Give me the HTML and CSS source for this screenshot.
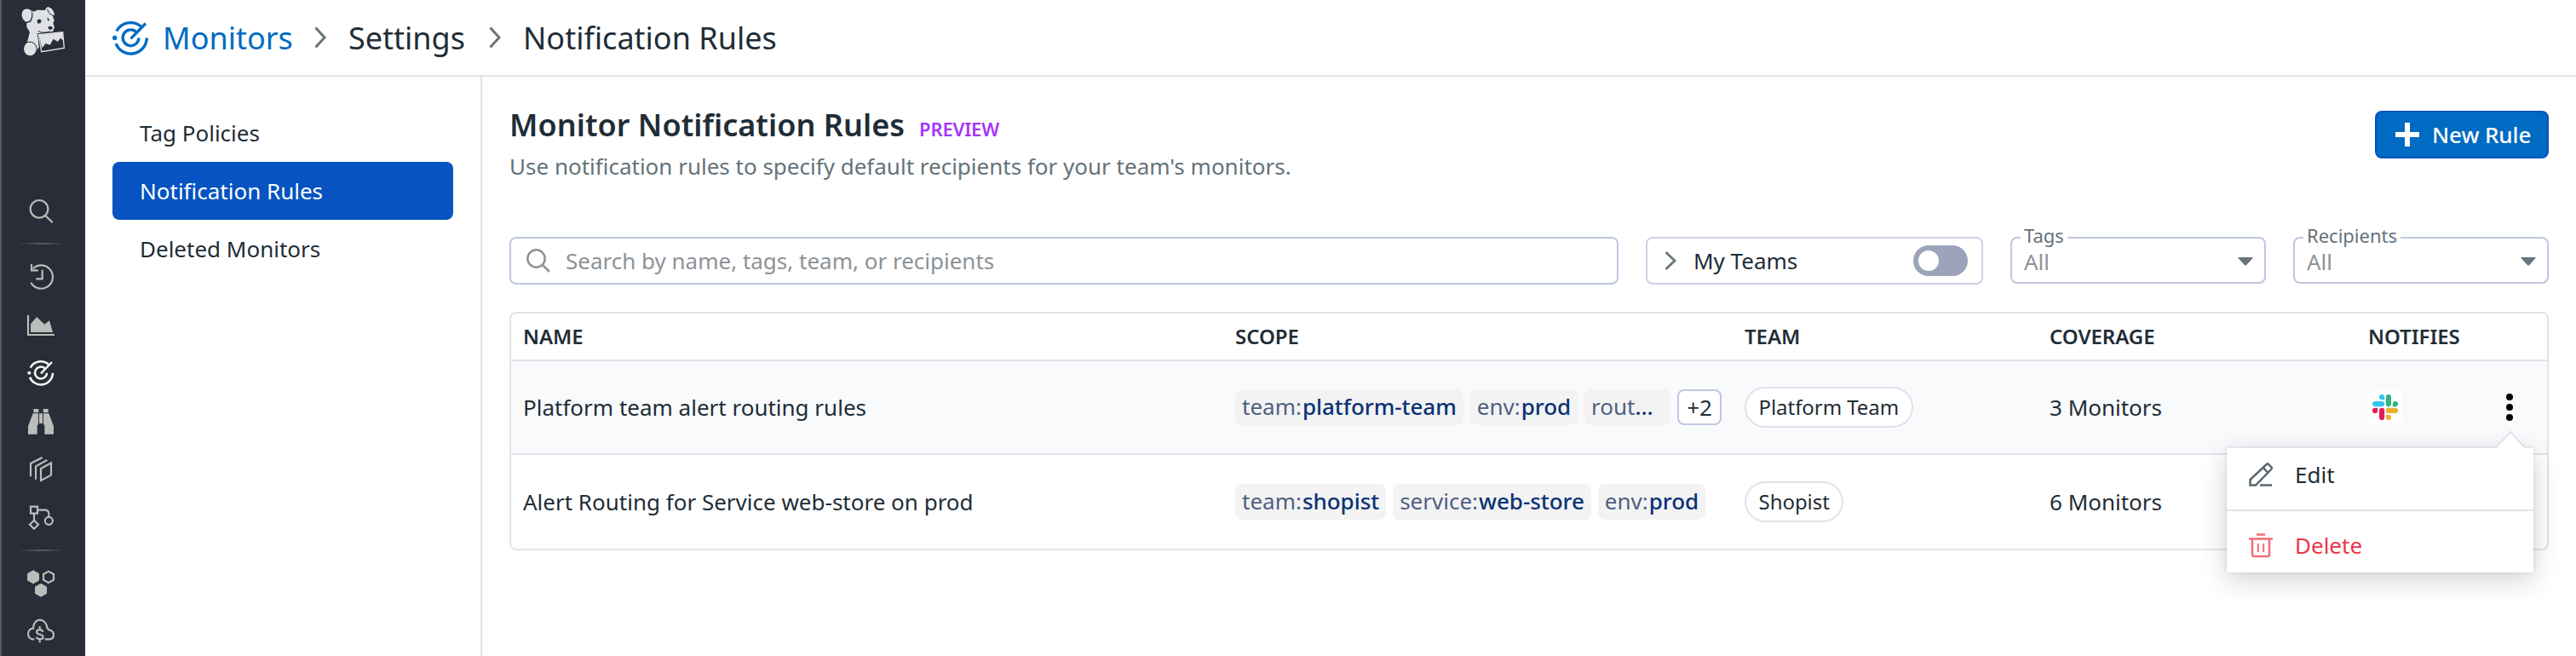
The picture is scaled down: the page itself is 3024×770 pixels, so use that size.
FILE: index.html
```html
<!DOCTYPE html>
<html lang="en">
<head>
<meta charset="utf-8">
<title>Monitor Notification Rules</title>
<link rel="stylesheet" href="styles.css">
</head>
<body>
<div class="app">
  <aside class="rail">
    <svg class="logo" viewBox="75 20 156 180">
      <path fill="#dfe1e4" d="M77 48C78 35 88 29 100 31C110 33 115 42 112 58C110 70 102 79 92 76C82 72 76 60 77 48z"/>
      <path fill="#dfe1e4" d="M108 33L118 40L132 34L158 35L163 27L170 23L182 30L190 42L192 53L185 52L191 72L187 80L192 96L186 110L160 113L134 117L137 166L128 178L126 160L112 147L96 146L105 112L94 94L94 80L108 76L115 60L114 42z"/>
      <ellipse cx="106" cy="171" rx="22" ry="24" fill="#dfe1e4"/>
      <path fill="none" stroke="#282d38" stroke-width="3" d="M94 77Q112 78 114 46M166 31L174 46L187 54M100 146Q130 146 130 176M134 108Q150 118 176 110"/>
      <path fill="#282d38" d="M130 70L140 66L146 72L143 80L133 82zM166 62L172 64L174 73L168 70zM168 94L176 91L186 95L184 102L174 104z"/>
      <path fill="#282d38" stroke="#282d38" stroke-width="9" d="M136 121L221 112L226 168L146 181z"/>
      <path fill="#282d38" stroke="#dfe1e4" stroke-width="4" d="M136 121L221 112L226 168L146 181z"/>
      <path fill="#dfe1e4" d="M137 121L221 112L222 141L213 133L203 146L188 136L176 157L161 152L148 168z"/>
    </svg>
    <a class="rail-item"><svg viewBox="96 697 96 96"><circle cx="138" cy="737" r="31"/><path d="M160 760L185 785"/></svg></a>
    <hr class="rail-divider">
    <a class="rail-item"><svg viewBox="96 927 96 96"><path d="M109 995A41 41 0 1 0 116 946M111 930V952H134M149 950V982H127"/></svg></a>
    <a class="rail-item"><svg viewBox="96 15 96 96"><path d="M99 27V96H192"/><path class="solid" d="M108 87V58L129 33L157 59L174 46L186 87z"/></svg></a>
    <a class="rail-item rail-item-active"><svg viewBox="96 187 96 96"><path d="M186 234A42 42 0 0 1 105 249M107 216A42 42 0 0 1 171 204M144 236L183 196M165 234A21 21 0 1 1 157 217"/><circle class="solid" cx="103" cy="234" r="6"/></svg></a>
    <a class="rail-item"><svg viewBox="96 354 96 96"><path class="solid" d="M118 357H136V370H118zM152 357H170V370H152zM116 373H135V412L131 414V446H99V418zM138 373H150V408H138zM153 373H172L189 418V446H157V414L153 412z"/></svg></a>
    <a class="rail-item"><svg viewBox="96 525 96 96"><path d="M108 598V552L149 531M126 608V562L166 540M144 570L180 550V593L144 612z"/></svg></a>
    <a class="rail-item"><svg viewBox="96 697 96 96"><path d="M108 705H132V729H108zM134 717H158Q172 717 172 731V741M120 731V752M120 753L135 768L120 783L105 768z"/><circle cx="172" cy="755" r="13.5"/></svg></a>
    <hr class="rail-divider">
    <a class="rail-item"><svg viewBox="96 925 96 96"><path class="solid" d="M117 926L138 938V962L117 974L96 962V938zM144 972L165 984V1008L144 1020L123 1008V984z"/><path d="M171 930L189 940V960L171 970L153 960V940z"/></svg></a>
    <a class="rail-item"><svg viewBox="96 1096 96 96"><path d="M121 1172H117A18 18 0 0 1 99 1155C99 1142 107 1134 117 1134C117 1115 128 1104 140 1104C152 1104 162 1113 165 1127C166 1136 170 1138 174 1139C183 1141 189 1149 189 1156C189 1166 183 1172 173 1172H158"/><path d="M151 1146C149 1136 129 1136 129 1146C129 1158 152 1153 152 1164C152 1174 130 1174 129 1164M140 1126V1138M140 1172V1184"/></svg></a>
  </aside>

  <div class="page">
    <header class="topbar">
      <a class="crumb crumb-root">
        <svg class="crumb-icon" viewBox="96 186 96 96"><path d="M186 234A42 42 0 0 1 105 249M107 216A42 42 0 0 1 171 204M144 236L183 196M165 234A21 21 0 1 1 157 217"/><circle cx="102" cy="234" r="6"/></svg>
        <span class="crumb-root-text">Monitors</span>
      </a>
      <svg class="crumb-sep" viewBox="0 0 14 26"><path d="M1.5 1.5L12 13L1.5 24.5"/></svg>
      <span class="crumb crumb-mid">Settings</span>
      <svg class="crumb-sep" viewBox="0 0 14 26"><path d="M1.5 1.5L12 13L1.5 24.5"/></svg>
      <span class="crumb">Notification Rules</span>
    </header>

    <div class="columns">
      <nav class="subnav">
        <a class="subnav-item">Tag Policies</a>
        <a class="subnav-item subnav-item-active">Notification Rules</a>
        <a class="subnav-item">Deleted Monitors</a>
      </nav>

      <main class="main">
        <div class="heading">
          <div>
            <div class="title-row"><h1 class="title">Monitor Notification Rules</h1><span class="preview">PREVIEW</span></div>
            <p class="lead">Use notification rules to specify default recipients for your team's monitors.</p>
          </div>
          <button class="new-rule"><svg class="plus" viewBox="0 0 28 28"><path d="M14 0V28M0 14H28"/></svg><span>New Rule</span></button>
        </div>

        <div class="filters">
          <div class="search">
            <svg class="search-icon" viewBox="0 0 28 28"><circle cx="11.5" cy="11.5" r="10.2"/><path d="M19 19L27 27"/></svg>
            <span>Search by name, tags, team, or recipients</span>
          </div>
          <div class="teams">
            <svg class="teams-chevron" viewBox="0 0 14 22"><path d="M1.5 1L12 11L1.5 21"/></svg>
            <span>My Teams</span>
            <span class="toggle"><span class="knob"></span></span>
          </div>
          <div class="select"><span class="select-label">Tags</span><span>All</span><svg class="caret" viewBox="0 0 18 10"><path d="M1 0H17Q18 0 17.5 1L10 9.3Q9 10 8 9.3L.5 1Q0 0 1 0z"/></svg></div>
          <div class="select"><span class="select-label">Recipients</span><span>All</span><svg class="caret" viewBox="0 0 18 10"><path d="M1 0H17Q18 0 17.5 1L10 9.3Q9 10 8 9.3L.5 1Q0 0 1 0z"/></svg></div>
        </div>

        <div class="table">
          <div class="row row-head"><span>NAME</span><span>SCOPE</span><span>TEAM</span><span>COVERAGE</span><span>NOTIFIES</span></div>
          <div class="row row-hover">
            <span>Platform team alert routing rules</span>
            <div class="tags">
              <span class="tag">team:<b>platform-team</b></span>
              <span class="tag">env:<b>prod</b></span>
              <span class="tag tag-cut">rout<b>...</b></span>
              <span class="more">+2</span>
            </div>
            <div><span class="pill">Platform Team</span></div>
            <span>3 Monitors</span>
            <div class="slack-cell">
              <span class="slack"><svg viewBox="0 0 30 30">
                <g fill="#36c5f0"><rect x="0" y="8" width="14.200" height="6.200" rx="3.100"/><path d="M11.100 0a3.100 3.100 0 0 1 3.100 3.100V6.200H11.100A3.100 3.100 0 0 1 11.100 0z"/></g>
                <g fill="#2eb67d"><rect x="15.800" y="0" width="6.200" height="14.200" rx="3.100"/><path d="M26.900 8a3.100 3.100 0 0 1 0 6.200H23.800V11.100A3.100 3.100 0 0 1 26.900 8z"/></g>
                <g fill="#ecb22e"><rect x="15.800" y="15.800" width="14.200" height="6.200" rx="3.100"/><path d="M22 26.900a3.100 3.100 0 0 1-6.200 0V23.800H18.900A3.100 3.100 0 0 1 22 26.900z"/></g>
                <g fill="#e01e5a"><rect x="8" y="15.800" width="6.200" height="14.200" rx="3.100"/><path d="M3.100 22a3.100 3.100 0 0 1 0-6.200H6.200V18.900A3.100 3.100 0 0 1 3.100 22z"/></g>
              </svg></span>
            </div>
            <div class="kebab">
              <i class="dot"></i><i class="dot"></i><i class="dot"></i>
              <div class="menu">
                <svg class="menu-arrow" viewBox="0 0 36 21"><path class="menu-arrow-fill" d="M0 21L18 1L36 21z"/><path class="menu-arrow-line" d="M1 19.500L18 1L35 19.500"/></svg>
                <a class="menu-item"><svg class="menu-icon" viewBox="0 0 28 28"><path d="M1.500 26.500V20L21 1.800Q22 1 23 1.800L26.500 5.500Q27.300 6.500 26.500 7.500L8 26.500zM17 6L22.500 12M13 26.500H27"/></svg>Edit</a>
                <a class="menu-item menu-item-danger"><svg class="menu-icon" viewBox="0 0 28 28"><path d="M9 1.500H19M0 6.500H28M4 6.500V24.500Q4 27 6.500 27H21.500Q24 27 24 24.500V6.500"/><path class="thin" d="M10.800 12V22M17.200 12V22"/></svg>Delete</a>
              </div>
            </div>
          </div>
          <div class="row row-last">
            <span>Alert Routing for Service web-store on prod</span>
            <div class="tags">
              <span class="tag">team:<b>shopist</b></span>
              <span class="tag">service:<b>web-store</b></span>
              <span class="tag">env:<b>prod</b></span>
            </div>
            <div><span class="pill">Shopist</span></div>
            <span>6 Monitors</span>
          </div>
        </div>
      </main>
    </div>
  </div>
</div>
</body>
</html>
```
FILE: styles.css
```css
* { box-sizing: border-box; }
body { margin: 0; background: #fff; color: #1f2d36; font: 26px/36px "Noto Sans", sans-serif; }
svg { display: block; flex: none; overflow: visible; }
.app { display: flex; width: 3024px; height: 770px; overflow: hidden; }

/* Icon rail */
.rail { display: flex; flex-direction: column; width: 100px; flex: none; background: #282d38; border-left: 2px solid #555962; padding: 7px 10px 0 0; }
.logo { width: 52px; height: 60px; margin: 0 0 152.700px 23px; }
.rail-item { display: flex; justify-content: center; align-items: center; height: 56.600px; flex: none; padding-left: 4px; }
.rail-item svg { width: 32px; height: 32px; fill: none; stroke: #babdba; stroke-width: 6.500; }
.rail-item .solid { fill: #babdba; stroke: none; }
.rail-item-active svg { stroke: #f4f6f4; stroke-width: 7.500; }
.rail-item-active .solid { fill: #f4f6f4; }
.rail-divider { width: 56px; height: 2px; flex: none; border: 0; margin: 9.200px 0 9.200px 19px; background: linear-gradient(90deg, transparent, #5d5c5e, transparent); }

/* Breadcrumbs */
.page { flex: 1; display: flex; flex-direction: column; }
.topbar { display: flex; align-items: center; height: 90px; border-bottom: 2px solid #e1e4ea; padding-left: 32px; font-size: 36px; line-height: 48px; }
.crumb { padding-top: 1px; }
.crumb-root { display: flex; align-items: center; padding-top: 0; color: #006bc2; width: 237px; }
.crumb-root-text { padding-top: 1px; }
.crumb-icon { width: 43px; height: 43px; margin-right: 16px; fill: none; stroke: #006bc2; stroke-width: 7.500; }
.crumb-icon circle { fill: #006bc2; stroke: none; }
.crumb-sep { width: 14px; height: 26px; fill: none; stroke: #69747b; stroke-width: 3; margin-right: 26px; }
.crumb-mid { width: 165px; }

/* Settings navigation */
.columns { display: flex; flex: 1; }
.subnav { width: 466px; border-right: 2px solid #e1e4ea; padding: 32px 32px 0; }
.subnav-item { display: block; height: 68px; line-height: 68px; padding-left: 32px; border-radius: 8px; }
.subnav-item-active { background: #0653c1; color: #fff; }

/* Page heading */
.main { flex: 1; padding: 32px 32px 0; }
.heading { display: flex; justify-content: space-between; align-items: flex-start; height: 156px; }
.title-row { display: flex; align-items: baseline; gap: 17px; padding-top: 1px; }
.title { margin: 0; font-size: 36px; line-height: 48px; font-weight: 600; letter-spacing: .03px; }
.preview { font-size: 22px; font-weight: 600; letter-spacing: -.2px; color: #a435fb; }
.lead { margin: 6px 0 0; color: #65727a; }
.new-rule { display: flex; align-items: center; width: 204px; height: 56px; margin-top: 8px; padding: 0 0 0 22px; gap: 15px; border: 2px solid #0653c1; border-radius: 8px; background: #006bc2; color: #fff; font: inherit; font-weight: 500; letter-spacing: -.1px; white-space: nowrap; }
.plus { width: 28px; height: 28px; stroke: #fff; stroke-width: 6; }

/* Filters */
.filters { display: flex; gap: 32px; height: 56px; margin-bottom: 32px; }
.search { display: flex; align-items: center; flex: 1; gap: 18px; padding-left: 18px; border: 2px solid #bec7de; border-radius: 8px; color: #8d9297; }
.search-icon { width: 28px; height: 28px; fill: none; stroke: #8d9297; stroke-width: 2.500; }
.teams { display: flex; align-items: center; width: 396px; padding: 0 16px 0 20px; border: 2px solid #cbd2e4; border-radius: 8px; }
.teams-chevron { width: 14px; height: 22px; margin-right: 20px; fill: none; stroke: #69747b; stroke-width: 2.800; }
.toggle { width: 64px; height: 36px; margin-left: auto; padding: 6px; border-radius: 18px; background: #9da3ba; }
.knob { display: block; width: 24px; height: 24px; border-radius: 50%; background: #fff; }
.select { position: relative; display: flex; align-items: center; justify-content: space-between; width: 300px; height: 55px; padding: 2px 13px 0 14px; border: 2px solid #bec7de; border-radius: 8px; color: #8d9297; }
.select-label { position: absolute; left: 10px; top: -19px; padding: 0 4px; background: #fff; color: #65727a; font-size: 22px; line-height: 30px; }
.caret { width: 18px; height: 12px; fill: #69747b; }

/* Rules table */
.table { border: 2px solid #e1e4ea; border-radius: 8px; }
.row { display: grid; grid-template-columns: 836px 598px 358px 374px 149px 1fr; align-items: center; height: 110px; padding-left: 14px; border-bottom: 2px solid #e1e4ea; }
.row-head { height: 56px; font-size: 24px; font-weight: 600; letter-spacing: -.05px; }
.row-hover { background: #f9fafc; }
.row-last { border-bottom: 0; }
.tags { display: flex; gap: 8px; }
.tag { height: 42px; line-height: 40px; padding: 0 8px; border-radius: 8px; background: #f3f3f4; color: #50607f; white-space: nowrap; }
.tag b { margin-left: 1px; font-weight: 500; letter-spacing: -.05px; color: #0a3274; }
.tag-cut { width: 101px; }
.tag-cut b { margin-left: 0; }
.more { width: 52px; height: 42px; line-height: 38px; text-align: center; border: 2px solid #c0c7e0; border-radius: 8px; background: #fff; }
.pill { display: inline-block; vertical-align: middle; height: 48px; line-height: 44px; padding: 0 14.500px; border: 2px solid #e1e3ec; border-radius: 24px; background: #fff; font-size: 24px; letter-spacing: -.05px; }
.slack { display: block; width: 40px; height: 40px; padding: 5px; border-radius: 8px; background: #fff; }
.slack svg { width: 30px; height: 30px; }
.kebab { position: relative; display: flex; flex-direction: column; gap: 4px; padding-left: 13px; }
.dot { width: 8px; height: 8px; border-radius: 50%; background: #000; }

/* Row menu */
.menu { position: absolute; z-index: 2; left: -315px; top: 64px; width: 360px; height: 146px; background: #fff; box-shadow: 0 8px 28px rgba(31, 45, 54, .22), 0 0 4px rgba(31, 45, 54, .12); }
.menu-arrow { position: absolute; left: 315px; top: -20px; width: 36px; height: 21px; }
.menu-arrow-fill { fill: #fff; }
.menu-arrow-line { fill: none; stroke: #e1e3ec; stroke-width: 2; }
.menu-item { display: flex; align-items: center; height: 74px; padding: 0 0 10px 26px; gap: 26px; border-bottom: 2px solid #e1e4ea; }
.menu-icon { width: 28px; height: 28px; margin-top: -1px; fill: none; stroke: #5a676f; stroke-width: 2.500; }
.menu-item-danger { height: 72px; padding: 8px 0 0 26px; border-bottom: 0; color: #eb364b; }
.menu-item-danger .menu-icon { stroke: #f26b78; }
.menu-icon .thin { stroke-width: 2; }
```
